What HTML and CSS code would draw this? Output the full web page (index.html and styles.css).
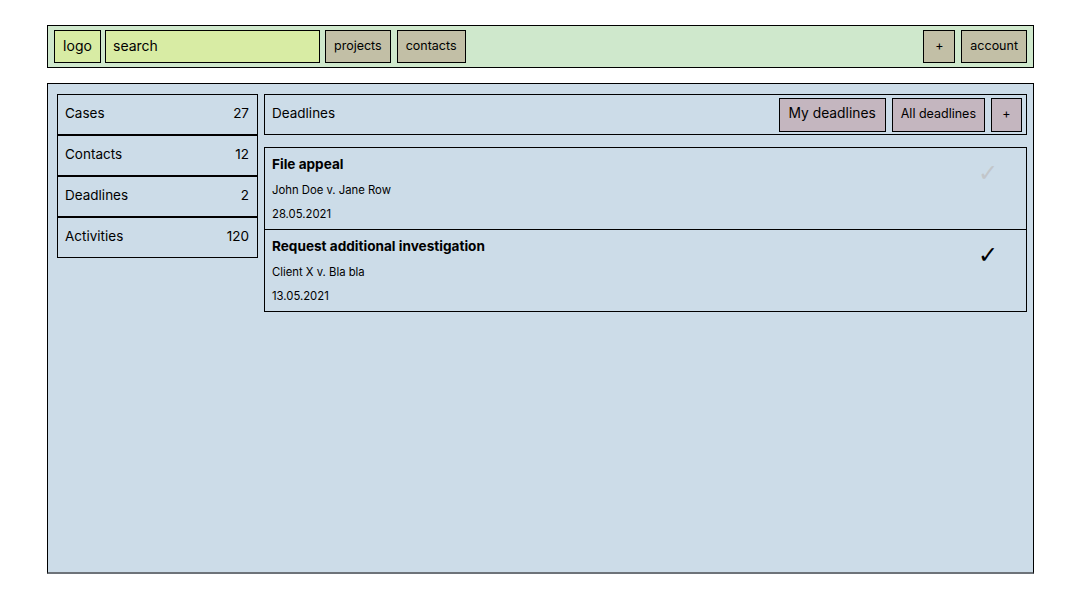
FILE: index.html
```html
<!DOCTYPE html>
<html lang="en">
<head>
<meta charset="utf-8">
<title>Deadlines</title>
<link rel="stylesheet" href="styles.css">
</head>
<body>
<header class="topbar">
  <div class="box lime logo">logo</div>
  <div class="box lime search">search</div>
  <div class="box tan nav">projects</div>
  <div class="box tan nav">contacts</div>
  <div class="spacer"></div>
  <div class="box tan nav plus">+</div>
  <div class="box tan nav">account</div>
</header>
<main class="panel">
  <aside class="sidebar">
    <div class="side-item"><span>Cases</span><span>27</span></div>
    <div class="side-item"><span>Contacts</span><span>12</span></div>
    <div class="side-item"><span>Deadlines</span><span>2</span></div>
    <div class="side-item"><span>Activities</span><span>120</span></div>
  </aside>
  <section class="content">
    <div class="content-head">
      <div class="title">Deadlines</div>
      <div class="actions">
        <div class="btn btn-lg">My deadlines</div>
        <div class="btn">All deadlines</div>
        <div class="btn btn-plus">+</div>
      </div>
    </div>
    <div class="cards">
      <div class="card">
        <div class="card-body">
          <div class="card-title">File appeal</div>
          <div class="card-line">John Doe v. Jane Row</div>
          <div class="card-line">28.05.2021</div>
        </div>
        <div class="check done">✓</div>
      </div>
      <div class="card">
        <div class="card-body">
          <div class="card-title">Request additional investigation</div>
          <div class="card-line">Client X v. Bla bla</div>
          <div class="card-line">13.05.2021</div>
        </div>
        <div class="check">✓</div>
      </div>
    </div>
  </section>
</main>
</body>
</html>
```
FILE: styles.css
```css
* { box-sizing: border-box; }
html, body { margin: 0; background: #fff; }
body {
  padding: 25px 46px 0 47px;
  font-family: Inter, "Noto Sans", sans-serif;
  color: #000;
}
.topbar {
  display: flex;
  align-items: center;
  gap: 6px;
  height: 43px;
  padding: 0 6px;
  background: #cfe8cc;
  border: 1px solid #000;
}
.box {
  height: 33px;
  display: flex;
  align-items: center;
  padding-bottom: 3px;
  border: 1px solid #000;
  font-size: 14px;
}
.lime { background: #d8eca4; }
.tan { background: #c2bfa6; }
.logo { width: 47px; justify-content: center; margin-right: -2px; }
.search { width: 215px; padding-left: 7px; margin-right: -1px; }
.nav { padding: 0 8px 3px; font-size: 12.5px; justify-content: center; }
.plus { width: 32px; padding: 0 0 3px; }
.spacer { flex: 1; }

.panel {
  margin-top: 15px;
  height: 491px;
  display: flex;
  gap: 6px;
  padding: 10px 6px 0 9px;
  background: #ccdce8;
  border: 1px solid #000;
  border-bottom: 2px solid #6d7379;
  align-items: flex-start;
}
.sidebar { width: 201px; display: flex; flex-direction: column; }
.side-item {
  height: 41px;
  display: flex;
  align-items: center;
  justify-content: space-between;
  padding: 0 8px 3px 7px;
  border: 1px solid #000;
  font-size: 13.5px;
}

.content { flex: 1; display: flex; flex-direction: column; gap: 12px; }
.content-head {
  height: 41px;
  display: flex;
  align-items: center;
  justify-content: space-between;
  padding: 0 4px 0 7px;
  border: 1px solid #000;
  font-size: 13.5px;
}
.title { padding-bottom: 3px; }
.actions { display: flex; gap: 6px; }
.btn {
  height: 34px;
  display: flex;
  align-items: center;
  padding: 0 8px 2px;
  background: #c4b6bf;
  border: 1px solid #000;
  font-size: 12.5px;
}
.btn-lg { font-size: 13.8px; padding: 0 9px 3px; }
.btn-plus { width: 31px; justify-content: center; padding: 0 0 2px; }

.cards { display: flex; flex-direction: column; }
.card {
  height: 83px;
  display: flex;
  justify-content: space-between;
  padding: 8px 28px 0 7px;
  border: 1px solid #000;
}
.card + .card { margin-top: -1px; }
.card-title { font-weight: 700; font-size: 13.6px; line-height: 17px; height: 17px; }
.card-line { font-size: 11.3px; line-height: 14px; margin-top: 10px; }
.check {
  font-family: "DejaVu Sans", sans-serif;
  font-size: 24px;
  line-height: 28px;
  margin-top: 3px;
  color: #000;
}
.check.done { color: #c2c6ca; }
```
